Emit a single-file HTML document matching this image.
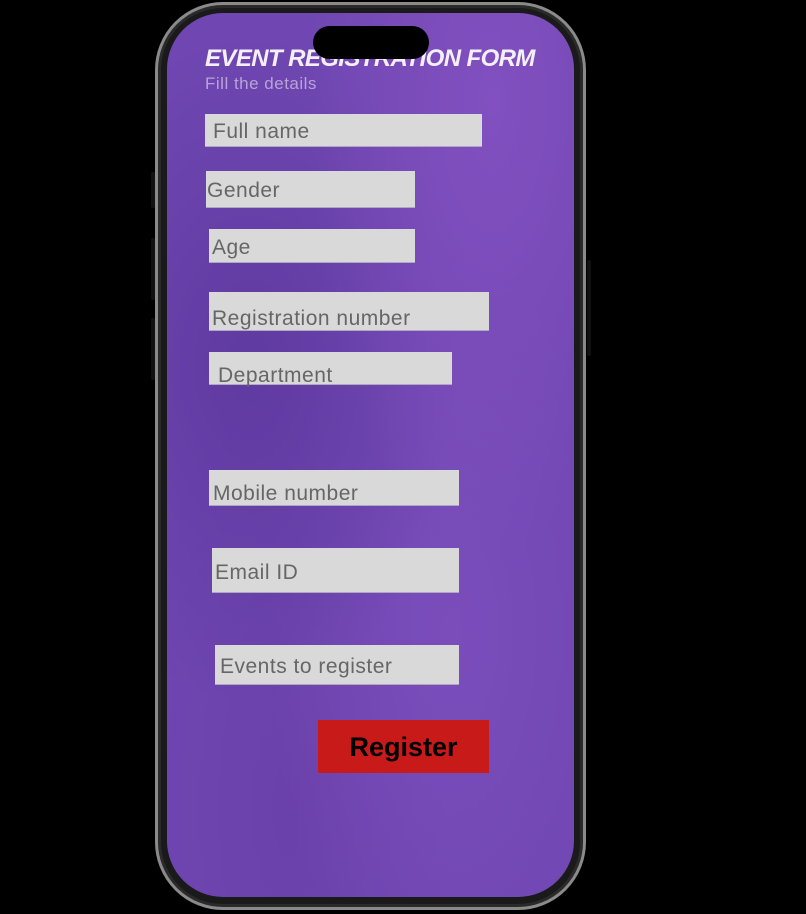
<!DOCTYPE html>
<html><head><meta charset="utf-8"><style>
*{margin:0;padding:0;box-sizing:border-box}
body{width:806px;height:914px;background:#000;position:relative;overflow:hidden;font-family:"Liberation Sans",sans-serif}
.phone{position:absolute;left:155px;top:2px;width:431px;height:908px;border-radius:68px;background:#1a1a1a;border:3px solid #8a8a8a;box-shadow:inset 0 0 0 3px #2a2a2a}
.screen{position:absolute;left:167px;top:13px;width:407px;height:884px;border-radius:56px;overflow:hidden;
background:radial-gradient(ellipse at 80% 10%,#8250c0 0%,transparent 40%),radial-gradient(ellipse at 20% 40%,#5f3aa0 0%,transparent 45%),radial-gradient(ellipse at 70% 70%,#7a4dbb 0%,transparent 45%),radial-gradient(ellipse at 30% 90%,#6a40aa 0%,transparent 40%),#7047b2}
.island{position:absolute;left:313px;top:26px;width:116px;height:33px;border-radius:17px;background:#000}
.btn{position:absolute;background:#111;width:4px;border-radius:2px}
.f{position:absolute;background:#d9d9d9;border-bottom:1px solid #b0a8c0}
.t{position:absolute;font-size:21px;color:#666;line-height:1;font-weight:normal;white-space:nowrap;letter-spacing:0.5px}
h1{position:absolute;left:205px;top:45px;font-size:24px;font-style:italic;font-weight:bold;color:#f4f0fa;letter-spacing:-0.6px;white-space:nowrap}
.sub{position:absolute;left:205px;top:74px;font-size:17px;color:#b8a4d8;white-space:nowrap;letter-spacing:0.5px}
.reg{position:absolute;left:318px;top:720px;width:171px;height:53px;background:#c91a1a;color:#000;font-weight:bold;font-size:27px;text-align:center;line-height:55px}
</style></head><body>
<div class="btn" style="left:151px;top:172px;height:36px"></div>
<div class="btn" style="left:151px;top:238px;height:62px"></div>
<div class="btn" style="left:151px;top:318px;height:62px"></div>
<div class="btn" style="left:587px;top:260px;height:96px"></div>
<div class="phone"></div>
<div class="screen"></div>
<h1>EVENT REGISTRATION FORM</h1>
<div class="island"></div>
<div class="sub">Fill the details</div>
<div class="f" style="left:205px;top:114px;width:277px;height:33px"></div><div class="t" style="left:213px;top:121px">Full name</div>
<div class="f" style="left:206px;top:171px;width:209px;height:37px"></div><div class="t" style="left:207px;top:180px">Gender</div>
<div class="f" style="left:209px;top:229px;width:206px;height:34px"></div><div class="t" style="left:212px;top:237px">Age</div>
<div class="f" style="left:209px;top:292px;width:280px;height:39px"></div><div class="t" style="left:212px;top:308px">Registration number</div>
<div class="f" style="left:209px;top:352px;width:243px;height:33px"></div><div class="t" style="left:218px;top:365px">Department</div>
<div class="f" style="left:209px;top:470px;width:250px;height:36px"></div><div class="t" style="left:213px;top:483px">Mobile number</div>
<div class="f" style="left:212px;top:548px;width:247px;height:45px"></div><div class="t" style="left:215px;top:562px">Email ID</div>
<div class="f" style="left:215px;top:645px;width:244px;height:40px"></div><div class="t" style="left:220px;top:656px">Events to register</div>
<div class="reg">Register</div>
</body></html>
